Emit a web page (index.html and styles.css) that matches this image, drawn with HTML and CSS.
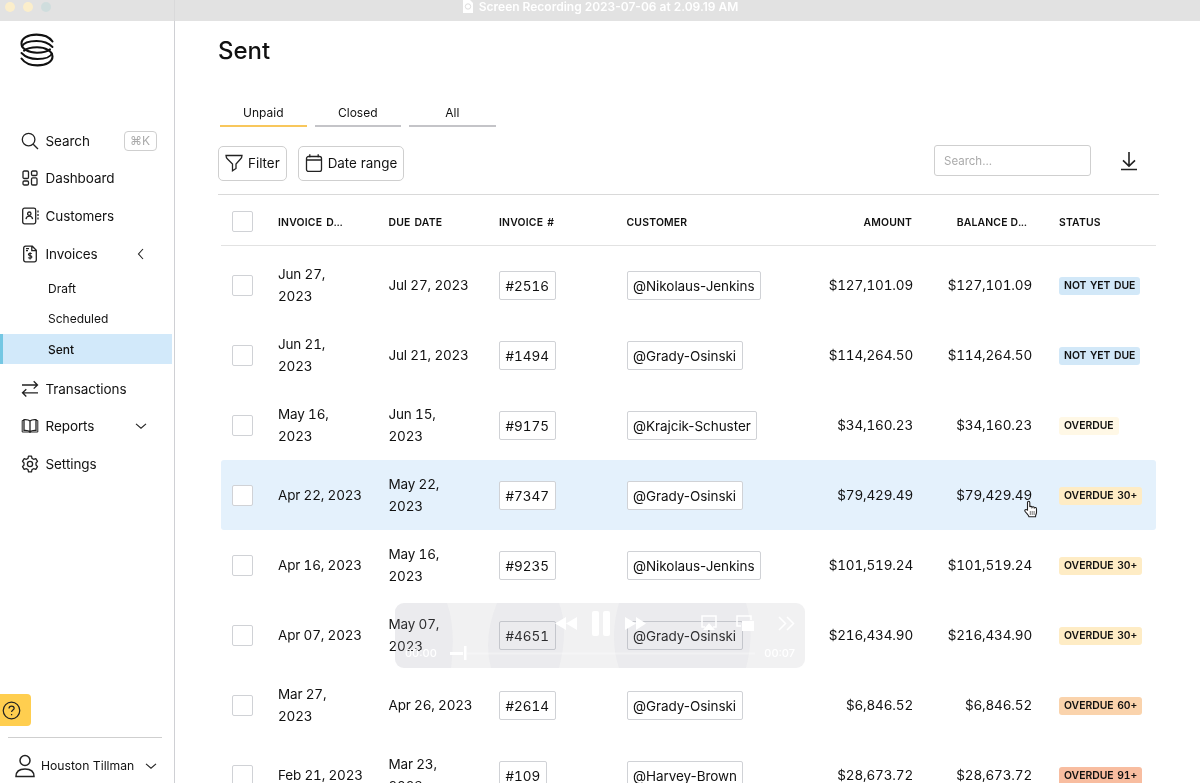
FILE: index.html
```html
<!DOCTYPE html>
<html lang="en">
<head>
    <meta charset="UTF-8">
    <meta name="viewport" content="width=device-width, initial-scale=1.0">
    <title>Sent invoices</title>
    <link rel="stylesheet" href="styles.css">
</head>
<body>
    <div class="app">
        <aside class="sidebar">
            <svg class="logo" viewBox="0 0 34 34" fill="none" stroke="#111" stroke-linecap="round">
                <g id="half">
                    <path d="M32.500 8.500C29 3.500 23 1.600 16.500 1.600 7.500 1.600 1.500 5.500 1.500 10.500c0 5.500 7 9.300 15.500 9.300 5.500 0 10-1 13-3.500" stroke-width="2.100"/>
                    <path d="M32.500 14C28.500 9.800 23 8 16.500 8 9 8 3.500 10 2 13.500" stroke-width="1.900"/>
                </g>
                <use href="#half" transform="rotate(180 17 17)"/>
            </svg>

            <nav class="nav">
                <a class="nav-item">
                    <svg class="icon" viewBox="0 0 18 18"><circle cx="7.600" cy="7.600" r="6.300"/><path d="M12.200 12.200l4.800 4.800"/></svg>
                    <span>Search</span>
                    <kbd class="shortcut">⌘K</kbd>
                </a>
                <a class="nav-item">
                    <svg class="icon" viewBox="0 0 18 18"><rect x="2" y="2" width="5.500" height="7.500" rx="1.200"/><rect x="10.500" y="2" width="5.500" height="4.500" rx="1.200"/><rect x="2" y="12" width="5.500" height="4" rx="1.200"/><rect x="10.500" y="8.800" width="5.500" height="7.200" rx="1.200"/></svg>
                    <span>Dashboard</span>
                </a>
                <a class="nav-item">
                    <svg class="icon" viewBox="0 0 18 18"><rect x="1.700" y="1.200" width="13" height="15.600" rx="1.800"/><circle cx="8.300" cy="6.700" r="1.700"/><path d="M5 12.200c.3-2 1.500-3 3.300-3s3 1 3.300 3M17 3.500v2M17 7v2M17 10.500v2"/></svg>
                    <span>Customers</span>
                </a>
                <a class="nav-item">
                    <svg class="icon" viewBox="0 0 18 18"><path d="M4.500 1.200h6.800l4 4v9.800a1.800 1.800 0 0 1-1.800 1.800h-9a1.800 1.800 0 0 1-1.800-1.800V3a1.800 1.800 0 0 1 1.800-1.800zM10.800 1.500v4.200h4.200M5 3.600h3M5 5.600h2"/><path d="M10.800 8.700c-.5-.6-3.400-.9-3.400.7s3.500.8 3.500 2.500-3.100 1.500-3.700.6M9.100 7.200v7.200" stroke-width="1.100"/></svg>
                    <span>Invoices</span>
                    <svg class="chevron left" viewBox="0 0 12 12"><path d="M8 1L3.500 6 8 11"/></svg>
                </a>
                <div class="subnav">
                    <a>Draft</a>
                    <a>Scheduled</a>
                    <a class="active">Sent</a>
                </div>
                <a class="nav-item">
                    <svg class="icon" viewBox="0 0 18 18"><path d="M1 5h15.500M12.700 1.300L16.500 5l-3.800 3.600M17 12.800H1.500M5.300 9.300l-3.800 3.500 3.800 3.700"/></svg>
                    <span>Transactions</span>
                </a>
                <a class="nav-item">
                    <svg class="icon" viewBox="0 0 18 18"><path d="M9 4C7.500 2.600 5.500 2.500 3 2.700v10.700c2.500-.2 4.500 0 6 1.300 1.500-1.300 3.500-1.500 6-1.300V2.700C12.500 2.500 10.500 2.600 9 4zM9 4v10.700"/><path d="M3 3.500H1.200V15H8l1 .5 1-.5h6.800V3.500H15" stroke-width="1"/></svg>
                    <span>Reports</span>
                    <svg class="chevron" viewBox="0 0 12 12"><path d="M1 3.800l5 4.400 5-4.400"/></svg>
                </a>
                <a class="nav-item">
                    <svg class="icon" viewBox="0 0 18 18"><circle cx="9" cy="9" r="2.600"/><path d="M7.500 1.200h3l.5 2.200 1.600.9 2.200-.7 1.700 2.800-1.500 1.600v2l1.500 1.600-1.700 2.800-2.200-.7-1.600.9-.5 2.200h-3L7 14.600l-1.600-.9-2.200.7-1.700-2.800L3 10V8L1.500 6.400l1.700-2.800 2.200.7L7 3.400z" stroke-linejoin="round"/></svg>
                    <span>Settings</span>
                </a>
            </nav>

            <div class="help">
                <svg viewBox="0 0 20 20"><circle cx="10" cy="10" r="8.700"/><path d="M7.400 8c0-1.700 1.200-2.700 2.700-2.700s2.700 1 2.700 2.400c0 1.800-2.700 2-2.700 4M10.100 13.600v1.300"/></svg>
            </div>
            <div class="user">
                <svg class="user-icon" viewBox="0 0 20 24"><circle cx="10" cy="6.500" r="5"/><path d="M1 22.500c0-5 3-7.500 9-7.500s9 2.500 9 7.500z"/></svg>
                <span>Houston Tillman</span>
                <svg class="chevron" viewBox="0 0 12 12"><path d="M1 3.800l5 4.400 5-4.400"/></svg>
            </div>
        </aside>

        <main class="content">
            <h1>Sent</h1>
            <div class="tabs">
                <a class="tab active">Unpaid</a>
                <a class="tab">Closed</a>
                <a class="tab">All</a>
            </div>
            <div class="toolbar">
                <button class="btn">
                    <svg viewBox="0 0 18 18"><path d="M1 1.500h16c0 2-.5 2.500-1.500 3.500L11 10v4.500L7.500 16.700V10L2.500 5C1.500 4 1 3.500 1 1.500z"/></svg>
                    <span>Filter</span>
                </button>
                <button class="btn">
                    <svg viewBox="0 0 18 18"><rect x="1.500" y="2.500" width="15" height="15" rx="2"/><path d="M1.500 6h15M4.800 .3v3M13.200 .3v3"/></svg>
                    <span>Date range</span>
                </button>
                <input class="search" type="text" placeholder="Search...">
                <svg class="download" viewBox="0 0 18 20"><path d="M9 1v14M3 9.300l6 5.800 6-5.800M1 18.500h16"/></svg>
            </div>

            <div class="table">
                <div class="row head">
                    <i class="check"></i><span>INVOICE D...</span><span>DUE DATE</span><span>INVOICE #</span><span>CUSTOMER</span><span class="num">AMOUNT</span><span class="num bal">BALANCE D...</span><span class="status">STATUS</span>
                </div>
                <div class="row">
                    <i class="check"></i><span class="date">Jun 27, 2023</span><span>Jul 27, 2023</span><span><b class="tag id">#2516</b></span><span><b class="tag">@Nikolaus-Jenkins</b></span><span class="num">$127,101.09</span><span class="num">$127,101.09</span><span class="status"><em class="badge blue">NOT YET DUE</em></span>
                </div>
                <div class="row">
                    <i class="check"></i><span class="date">Jun 21, 2023</span><span>Jul 21, 2023</span><span><b class="tag id">#1494</b></span><span><b class="tag">@Grady-Osinski</b></span><span class="num">$114,264.50</span><span class="num">$114,264.50</span><span class="status"><em class="badge blue">NOT YET DUE</em></span>
                </div>
                <div class="row">
                    <i class="check"></i><span class="date">May 16, 2023</span><span class="date">Jun 15, 2023</span><span><b class="tag id">#9175</b></span><span><b class="tag">@Krajcik-Schuster</b></span><span class="num">$34,160.23</span><span class="num">$34,160.23</span><span class="status"><em class="badge cream">OVERDUE</em></span>
                </div>
                <div class="row hover">
                    <i class="check"></i><span>Apr 22, 2023</span><span class="date">May 22, 2023</span><span><b class="tag id">#7347</b></span><span><b class="tag">@Grady-Osinski</b></span><span class="num">$79,429.49</span><span class="num">$79,429.49</span><span class="status"><em class="badge yellow">OVERDUE 30+</em></span>
                </div>
                <div class="row">
                    <i class="check"></i><span>Apr 16, 2023</span><span class="date">May 16, 2023</span><span><b class="tag id">#9235</b></span><span><b class="tag">@Nikolaus-Jenkins</b></span><span class="num">$101,519.24</span><span class="num">$101,519.24</span><span class="status"><em class="badge yellow">OVERDUE 30+</em></span>
                </div>
                <div class="row">
                    <i class="check"></i><span>Apr 07, 2023</span><span class="date">May 07, 2023</span><span><b class="tag id">#4651</b></span><span><b class="tag">@Grady-Osinski</b></span><span class="num">$216,434.90</span><span class="num">$216,434.90</span><span class="status"><em class="badge yellow">OVERDUE 30+</em></span>
                </div>
                <div class="row">
                    <i class="check"></i><span class="date">Mar 27, 2023</span><span>Apr 26, 2023</span><span><b class="tag id">#2614</b></span><span><b class="tag">@Grady-Osinski</b></span><span class="num">$6,846.52</span><span class="num">$6,846.52</span><span class="status"><em class="badge orange">OVERDUE 60+</em></span>
                </div>
                <div class="row">
                    <i class="check"></i><span>Feb 21, 2023</span><span class="date">Mar 23, 2023</span><span><b class="tag id">#109</b></span><span><b class="tag">@Harvey-Brown</b></span><span class="num">$28,673.72</span><span class="num">$28,673.72</span><span class="status"><em class="badge red">OVERDUE 91+</em></span>
                </div>
            </div>
        </main>
    </div>

    <!-- player window chrome -->
    <div class="titlebar">
        <div class="lights"><i></i><i></i><i></i></div>
        <svg viewBox="0 0 12 13"><path d="M1 0h7l3 3v10H1z" fill="#fff"/><circle cx="6" cy="6.500" r="2.700" fill="none" stroke="#ddd"/></svg>
        <span>Screen Recording 2023-07-06 at 2.09.19 AM</span>
    </div>
    <div class="player">
        <svg viewBox="0 0 410 65">
            <path d="M0 0h52q9 26 4 65H0zM102 0h62q10 26 0 65h-68q-8-30 6-65zM224 0h127q9 30 0 65H224q-10-30 0-65z" fill="#c9ccd6" opacity=".15"/>
            <g fill="#fff">
                <path d="M171 14v13l-11-6.500zM182 14v13l-11-6.500z"/>
                <rect x="197" y="8" width="7" height="25" rx="2"/><rect x="208" y="8" width="7" height="25" rx="2"/>
                <path d="M230 14v13l11-6.500zM241 14v13l10-6.500z"/>
                <path d="M314 20l6 7h-12zM347 18h12v10h-12z"/>
                <rect x="55" y="49" width="13" height="3"/><rect x="69" y="43" width="2.500" height="14"/>
            </g>
            <path d="M310 24h-3V13h14v11h-3M346 23h-4V13h14v4M384 14l6.500 6.500-6.500 6.500M392 14l6.500 6.500-6.500 6.500" fill="none" stroke="#fff" stroke-width="1.500"/>
            <path d="M72 50.500h288" stroke="#fff" stroke-opacity=".3" stroke-width="2"/>
        </svg>
        <span class="time start">00:00</span>
        <span class="time end">00:07</span>
    </div>
    <svg class="cursor" viewBox="0 0 16 18"><path d="M4.500 10V2.500c0-1.700 2.300-1.700 2.300 0V7c.5-1 2.100-.8 2.300.3.500-.9 2-.6 2.200.5.700-.7 2.200-.3 2.200 1.100v3.500c0 1.500-1 2.300-1 4.300H6c-.7-2-2.700-3.500-4-5.500-.8-1.400.8-2.300 2.500-1.200z" fill="#fff" stroke="#222" stroke-width="1.100"/><path d="M7.300 11v4M9.200 11v4M11.100 11v4" stroke="#555" stroke-width=".8"/></svg>
</body>
</html>
```
FILE: styles.css
```css
* {
    box-sizing: border-box;
}
body {
    margin: 0;
    height: 783px;
    overflow: hidden;
    position: relative;
    background: #fff;
    color: #111;
    font-family: Inter, "Liberation Sans", sans-serif;
    font-size: 13.500px;
}
svg {
    display: block;
    flex: none;
}
.app {
    display: flex;
    height: 783px;
    overflow: hidden;
}

/* sidebar */
.sidebar {
    width: 175px;
    flex: none;
    border-right: 1px solid #cfd0d4;
    display: flex;
    flex-direction: column;
}
.logo {
    width: 34px;
    height: 34px;
    margin: 33px 0 54.900px 20px;
}
.nav {
    display: flex;
    flex-direction: column;
}
.nav-item {
    display: flex;
    align-items: center;
    height: 37.700px;
    padding: 0 27.500px 0 20.500px;
    letter-spacing: -0.080px;
}
.icon {
    width: 18px;
    height: 18px;
    margin-right: 7px;
}
.icon, .chevron, .help svg, .user-icon, .btn svg, .download {
    fill: none;
    stroke: #222;
    stroke-width: 1.300;
}
.chevron {
    width: 12px;
    height: 12px;
    margin-left: auto;
    stroke-width: 1.100;
}
.shortcut {
    margin-left: auto;
    margin-right: -10px;
    width: 33px;
    height: 20px;
    border: 1px solid #cfcfcf;
    border-radius: 4px;
    color: #aaa;
    font: 12px/18px Inter, "DejaVu Sans", sans-serif;
    text-align: center;
}
.subnav {
    display: flex;
    flex-direction: column;
    padding: 0 2px 5.500px 0;
    font-size: 12px;
}
.subnav a {
    height: 30.600px;
    line-height: 32px;
    padding-left: 48px;
}
.subnav .active {
    background: #d2e9fa;
    border-left: 3px solid #74c7e3;
    padding-left: 45px;
    font-weight: 500;
}
.help {
    width: 31px;
    height: 32px;
    margin-top: auto;
    background: #ffce4f;
    border-radius: 0 4px 4px 0;
    display: flex;
    align-items: center;
    padding-left: 2px;
}
.help svg {
    width: 19px;
    height: 19px;
}
.user {
    display: flex;
    align-items: center;
    margin: 11px 12px 0 8px;
    padding: 10px 5px 0 7px;
    height: 46px;
    border-top: 1px solid #cfcfcf;
    font-size: 12.200px;
}
.user-icon {
    width: 20px;
    height: 24px;
    margin-right: 6px;
    stroke-width: 1.500;
}

/* main area */
.content {
    width: 941px;
    margin-left: 43px;
}
h1 {
    margin: 35px 0 0;
    font-size: 24px;
    line-height: 32px;
    font-weight: 500;
}
.tabs {
    display: flex;
    gap: 8px;
    margin: 33px 0 0 2px;
}
.tab {
    width: 86.500px;
    height: 27px;
    line-height: 26px;
    text-align: center;
    font-size: 12px;
    border-bottom: 2px solid #c4c4c8;
}
.tab.active {
    border-color: #f8c75c;
}
.toolbar {
    display: flex;
    align-items: center;
    height: 68px;
    padding-top: 5px;
    border-bottom: 1px solid #d9d9d9;
    margin-top: 0;
}
.btn {
    display: flex;
    align-items: center;
    gap: 5px;
    height: 35px;
    padding: 0 6px;
    margin-right: 11px;
    border: 1.500px solid #cfcfcf;
    border-radius: 5px;
    background: #fff;
    color: #111;
    font: 13.400px Inter, "Liberation Sans", sans-serif;
}
.btn svg {
    width: 18px;
    height: 18px;
}
.search {
    width: 157px;
    height: 31px;
    margin-left: auto;
    margin-bottom: 6px;
    padding: 1px 9px 0;
    border: 1px solid #cfcfcf;
    border-radius: 3px;
    font: 11.500px Inter, "Liberation Sans", sans-serif;
}
.search::placeholder {
    color: #aaa;
}
.download {
    width: 18px;
    height: 20px;
    margin: 0 21px 5px 29px;
    stroke-width: 1.600;
}

/* invoice table */
.table {
    margin-left: 3px;
    width: 935px;
}
.row {
    display: grid;
    grid-template-columns: 46px 110.500px 110.500px 127.500px 150.500px 136px 119px 1fr;
    align-items: center;
    height: 70px;
    padding: 0 0 0 11px;
    line-height: 22px;
    letter-spacing: -0.180px;
    border-radius: 3px;
    font-variant-numeric: tabular-nums;
}
.row.head {
    height: 51px;
    padding-top: 5px;
    margin-bottom: 4px;
    border-bottom: 1px solid #e2e2e2;
    border-radius: 0;
    font-size: 10.400px;
    font-weight: 600;
    letter-spacing: 0.200px;
    word-spacing: 1px;
}
.row.hover {
    background: #e4f1fc;
}
.check {
    width: 21px;
    height: 21px;
    border: 1.500px solid #d0d2d6;
    border-radius: 2px;
    background: #fff;
}
.head .check {
    margin-top: -2px;
}
.date {
    width: 60px;
}
.num {
    text-align: right;
    letter-spacing: -0.150px;
}
.head .num {
    padding-right: 1px;
    letter-spacing: 0.150px;
}
.head .bal {
    padding-right: 5px;
    word-spacing: 0;
}
.status {
    padding: 1px 0 0 27px;
    line-height: 18px;
}
.tag {
    display: inline-block;
    height: 29px;
    line-height: 28px;
    padding: 0 5.500px;
    border: 1px solid #d0d2d6;
    border-radius: 2px;
    background: #fff;
    font-weight: 400;
    font-variant-numeric: normal;
    letter-spacing: -0.060px;
    vertical-align: top;
}
.tag.id {
    font-variant-numeric: tabular-nums;
    letter-spacing: 0;
}
.badge {
    display: inline-block;
    height: 18px;
    line-height: 18px;
    padding: 0 5px;
    border-radius: 3px;
    font-style: normal;
    font-size: 10.400px;
    font-weight: 600;
    letter-spacing: 0;
    word-spacing: 0.700px;
    vertical-align: top;
}
.blue {
    background: #d2e8f8;
}
.cream {
    background: #fff8e6;
}
.yellow {
    background: #feecc5;
}
.orange {
    background: #fad3ac;
}
.red {
    background: #f8bda0;
}

/* player chrome */
.titlebar {
    position: absolute;
    inset: 0 0 auto 0;
    height: 21px;
    background: rgba(219, 219, 219, 0.800);
    display: flex;
    justify-content: center;
    gap: 5px;
    color: #fff;
    font-size: 12px;
    font-weight: 600;
    line-height: 14px;
}
.titlebar svg {
    width: 12px;
    height: 13px;
}
.lights {
    position: absolute;
    left: 5px;
    top: 2px;
    display: flex;
    gap: 8px;
}
.lights i {
    width: 10px;
    height: 10px;
    border-radius: 50%;
    background: #fbeecb;
}
.lights i:last-child {
    background: #cfdddd;
}
.player {
    position: absolute;
    left: 395px;
    top: 603px;
    width: 410px;
    height: 65px;
    border-radius: 9px;
    overflow: hidden;
}
/* multiply keeps the table text readable under the bar */
.player::before {
    content: "";
    position: absolute;
    inset: 0;
    background: #f1f1f2;
    mix-blend-mode: multiply;
}
.player svg {
    position: relative;
}
.time {
    position: absolute;
    top: 43px;
    color: #fff;
    font-size: 11px;
    font-weight: 500;
}
.start {
    left: 10px;
}
.end {
    right: 10px;
}
.cursor {
    position: absolute;
    left: 1023px;
    top: 500px;
    width: 16px;
    height: 18px;
}
```
